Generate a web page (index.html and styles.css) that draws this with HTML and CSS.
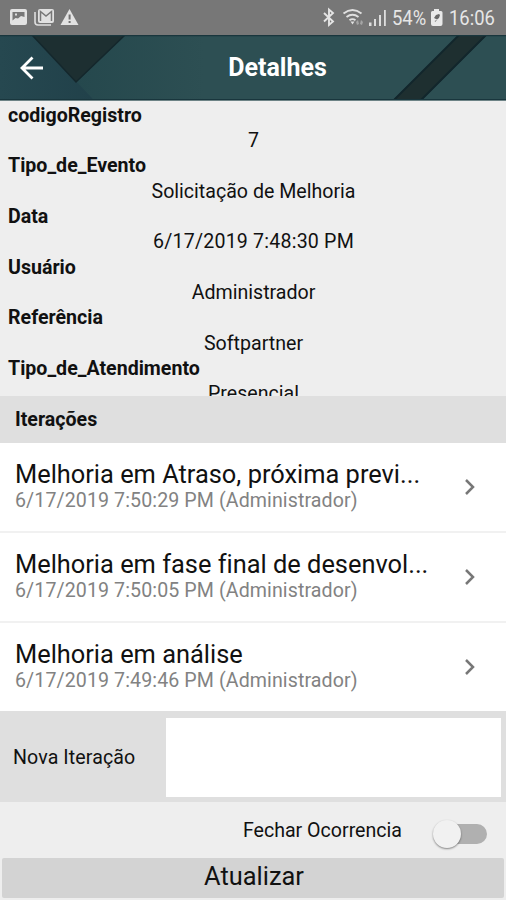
FILE: index.html
```html
<!DOCTYPE html>
<html lang="pt-BR">
<head>
<meta charset="utf-8">
<title>Detalhes</title>
<link rel="stylesheet" href="styles.css">
</head>
<body>
<div class="statusbar">
  <svg class="notifications" width="90" height="35" viewBox="0 0 90 35">
    <path fill="#e2e2e2" fill-rule="evenodd" d="M12 9h13q2 0 2 2v12q0 2-2 2H12q-2 0-2-2V11q0-2 2-2zM12.500 12v8.500l3-2.500 2.500 .5 3-2.500 3.500 1V12z"/>
    <path fill="#dedede" d="M15 13.500h2v2h-2z"/>
    <path fill="none" stroke="#dedede" stroke-width="1.600" d="M35 12v10q0 3 3 3h13"/>
    <rect x="38" y="9" width="16" height="14" rx="2" fill="#e0e0e0"/>
    <path fill="none" stroke="#777" stroke-width="1.500" d="M40.500 21v-9.500l5.500 4.500 5.500-4.500V21"/>
    <path fill="#e2e2e2" d="M69.500 9l9 16h-18z"/>
    <path fill="#707070" d="M68.600 14.500h2v5h-2zM68.600 21h2v2h-2z"/>
  </svg>
  <svg class="signals" width="70" height="35" viewBox="320 0 70 35">
    <path fill="none" stroke="#e4e4e4" stroke-width="1.900" d="M324 13l9 8.500-4 3.500V9.500l4 3.500-9 8.500"/>
    <g fill="none" stroke="#e0e0e0" stroke-width="1.900">
      <path d="M343.500 13.500q9-7 18 0M346.500 17q6-4.500 12 0M349.500 20.200q3-2.200 6 0"/>
    </g>
    <path fill="#e0e0e0" d="M350.500 21.500h4l-2 3z"/>
    <path fill="#a5a5a5" d="M356 22l2-2 1 4-2 1zM360 24l1-4 2 2-1 3z"/>
    <path fill="#ddd" d="M369 22.500h2.500V26H369zM374 19h2v7h-2zM379 15h2v11h-2zM384 10h1.800v16H384z"/>
  </svg>
  <span class="percent">54%</span>
  <svg class="battery" width="14" height="35" viewBox="0 0 14 35">
    <path fill="#e9e9e9" d="M4 9h5v2h2q1.500 0 1.500 1.500V24q0 2-2 2H3q-2 0-2-2V12.500Q1 11 2.500 11H4z"/>
    <path fill="#686868" d="M4 18l2-3 3-1 1 1-1 3-2 1.500zM4.500 21l2.500-1-1.500 1.800z"/>
  </svg>
  <span class="clock">16:06</span>
</div>
<header class="header">
  <svg class="header-art" width="506" height="65" viewBox="0 0 506 65">
    <defs>
      <linearGradient id="left" x1="0" x2="1"><stop offset="0" stop-color="#264850"/><stop offset="1" stop-color="#21414a"/></linearGradient>
      <linearGradient id="fade" x1="0" x2="1"><stop offset="0" stop-color="#25484d"/><stop offset="1" stop-color="#2d4f53"/></linearGradient>
    </defs>
    <path fill="#2d4f53" d="M0 0h506v65H0z"/>
    <path fill="url(#fade)" d="M76 47L124 0h80v65H94z"/>
    <path fill="url(#left)" d="M0 0h32l62 65H0z"/>
    <path fill="#1d2f31" stroke="#14272c" stroke-width="1.500" d="M32 0h93L76 47z"/>
    <path fill="#1e2f30" d="M459 0h28l-65 65h-29z"/>
    <path fill="none" stroke="#12262c" stroke-width="2" d="M459 0l-65 65M486 0l-65 65"/>
    <path fill="#19363d" d="M0 0h506v1.200H0zM0 64h506v1H0z"/>
    <path fill="none" stroke="#fff" stroke-width="2.800" d="M43 33H22M32.500 22.500L22 33l10.500 10.500"/>
  </svg>
  <h1 class="title">Detalhes</h1>
</header>
<dl class="details">
  <dt>codigoRegistro</dt><dd>7</dd>
  <dt>Tipo_de_Evento</dt><dd>Solicitação de Melhoria</dd>
  <dt>Data</dt><dd class="date">6/17/2019 7:48:30 PM</dd>
  <dt>Usuário</dt><dd>Administrador</dd>
  <dt>Referência</dt><dd>Softpartner</dd>
  <dt>Tipo_de_Atendimento</dt><dd>Presencial</dd>
</dl>
<h2 class="section">Iterações</h2>
<ul class="list">
  <li class="item">
    <div class="item-text"><div class="item-title">Melhoria em Atraso, próxima previ...</div><div class="item-meta">6/17/2019 7:50:29 PM (Administrador)</div></div>
    <svg class="chevron" width="12" height="18" viewBox="0 0 12 18"><path d="M2 2l7 7-7 7"/></svg>
  </li>
  <li class="item">
    <div class="item-text"><div class="item-title">Melhoria em fase final de desenvol...</div><div class="item-meta">6/17/2019 7:50:05 PM (Administrador)</div></div>
    <svg class="chevron" width="12" height="18" viewBox="0 0 12 18"><path d="M2 2l7 7-7 7"/></svg>
  </li>
  <li class="item">
    <div class="item-text"><div class="item-title">Melhoria em análise</div><div class="item-meta">6/17/2019 7:49:46 PM (Administrador)</div></div>
    <svg class="chevron" width="12" height="18" viewBox="0 0 12 18"><path d="M2 2l7 7-7 7"/></svg>
  </li>
</ul>
<div class="new-item">
  <label class="new-label" for="note">Nova Iteração</label>
  <textarea class="note" id="note"></textarea>
</div>
<div class="close-row">
  <span class="close-label">Fechar Ocorrencia</span>
  <span class="switch"><span class="knob"></span></span>
</div>
<button class="submit" type="button">Atualizar</button>
</body>
</html>
```

FILE: styles.css
```css
* { box-sizing: border-box; }
body {
  margin: 0;
  width: 506px;
  height: 900px;
  overflow: hidden;
  display: flex;
  flex-direction: column;
  background: #eee;
  color: #111;
  font-family: Roboto, sans-serif;
  font-size: 19.600px;
  font-variant-ligatures: none;
}
body > * { flex: none; }
svg { display: block; }
.statusbar {
  height: 35px;
  display: flex;
  align-items: center;
  background: #777;
  color: #e6e6e6;
  font-size: 20px;
}
.signals { margin-left: 230px; }
.percent, .clock {
  white-space: nowrap;
  padding-top: 1px;
  transform: scaleX(.92);
  transform-origin: left center;
}
.percent { width: 38px; margin-left: 2px; }
.battery { margin-right: 5px; }
.header { height: 66px; display: grid; background: #6d8386; }
.header-art, .title { grid-area: 1 / 1; }
.title {
  margin: 0;
  color: #fff;
  text-align: center;
  font-size: 25px;
  font-weight: 700;
  line-height: 66px;
  padding-left: 49px;
}
.details {
  height: 295px;
  margin: 0;
  padding: 1.700px 7px 0 8px;
  overflow: hidden;
  line-height: 25.320px;
}
.details dt { font-weight: 700; }
.details dd { margin: 0; text-align: center; }
.details .date { letter-spacing: .2px; }
.section {
  height: 47px;
  margin: 0;
  padding-left: 15px;
  background: #dfdfdf;
  font-size: 19.600px;
  line-height: 47px;
}
.list {
  list-style: none;
  margin: 0;
  padding: 0;
  height: 268px;
  display: flex;
  flex-direction: column;
  gap: 2px;
  background: #f1f1f1;
}
.item {
  height: 88px;
  display: flex;
  justify-content: space-between;
  padding: 17px 30px 0 15px;
  background: #fff;
}
.item-title { font-size: 25.400px; line-height: 29px; white-space: nowrap; }
.item-meta { font-size: 19.600px; line-height: 24px; color: #828282; letter-spacing: .1px; white-space: nowrap; }
.chevron { margin-top: 18px; fill: none; stroke: #777; stroke-width: 2.500; }
.new-item {
  height: 91px;
  display: flex;
  padding: 7px 5px 5px 13px;
  background: #dfdfdf;
}
.new-label { width: 153px; line-height: 79px; letter-spacing: .1px; }
.note {
  flex: 1;
  height: 79px;
  padding: 6px;
  border: 0;
  background: #fff;
  resize: none;
  font: inherit;
}
.close-row {
  height: 56px;
  display: flex;
  justify-content: flex-end;
  padding-right: 19px;
}
.close-label { line-height: 58px; margin-right: 33px; }
.switch {
  display: flex;
  align-items: center;
  width: 52px;
  height: 20px;
  margin-top: 22px;
  border-radius: 10px;
  background: linear-gradient(90deg, transparent 20px, #b0b0b0 20px);
}
.knob {
  width: 28px;
  height: 28px;
  margin-left: -2px;
  border-radius: 50%;
  background: #f1f1f1;
  box-shadow: 0 1px 2px rgba(0, 0, 0, .45);
}
.submit {
  height: 40px;
  margin: 0 2px;
  padding: 0 0 4px 2px;
  border: 0;
  border-radius: 2px;
  background: #d3d3d3;
  color: #111;
  font: 25.400px Roboto, sans-serif;
}
```
